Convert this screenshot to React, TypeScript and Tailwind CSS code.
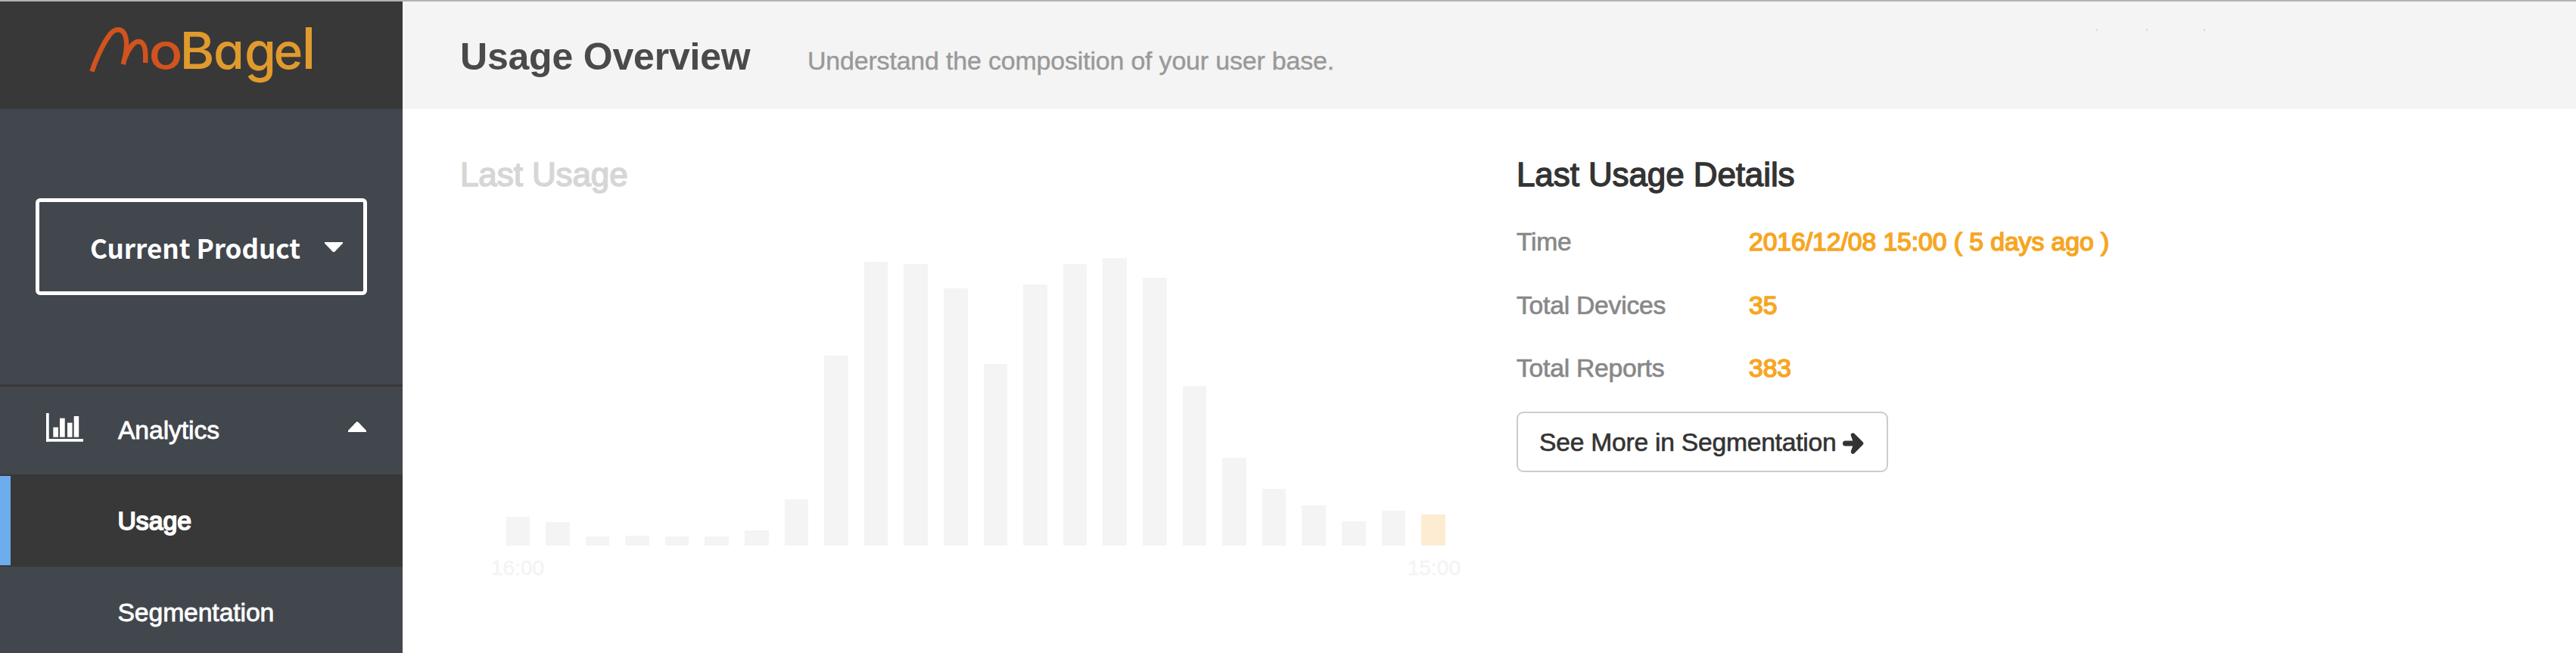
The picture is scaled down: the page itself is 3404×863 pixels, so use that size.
const BARS = [
  38, 31, 12.5, 13.5, 12.3, 12.3, 20, 61, 251.5, 375, 372, 340, 240, 345, 372.3, 380,
  354, 211.3, 115.7, 75.3, 52.7, 32, 46.3, 40.7,
];

const DETAILS = [
  { label: "Time", value: "2016/12/08 15:00 ( 5 days ago )" },
  { label: "Total Devices", value: "35" },
  { label: "Total Reports", value: "383" },
];

function Logo() {
  return (
    <svg
      className="block h-[142px] w-[532px]"
      viewBox="0 2 532 142"
      fontFamily="Inter, sans-serif"
      fontWeight={500}
      fontSize={66}
      style={{ fontFeatureSettings: '"cv11"' }}
    >
      <path
        d="M121.500 94.500C126 80 135 60 143.500 48C151 37 161 36.500 165 46C169 56 166.500 72 162.700 85M163.500 81C169 66 176 55 183 54.800C192 55 193 68 192 83"
        fill="none"
        stroke="#d1531e"
        strokeWidth={6.500}
      />
      <text x={196.500} y={91} textLength={45} lengthAdjust="spacingAndGlyphs" fill="#d1531e">
        o
      </text>
      <g fill="#e09a2d">
        <text x={237.500} y={91} fontSize={68} textLength={46} lengthAdjust="spacingAndGlyphs">B</text>
        <text x={282} y={91}>a</text>
        <text x={323} y={94} fontSize={72} textLength={42} lengthAdjust="spacingAndGlyphs">g</text>
        <text x={361.500} y={91}>e</text>
        <text x={398.500} y={91} fontSize={75}>l</text>
      </g>
    </svg>
  );
}

function ChartIcon() {
  return (
    <svg className="h-[38px] w-[49px] shrink-0" viewBox="0 0 49 38" fill="#fff">
      <rect x="0" y="0" width="3.700" height="37.700" />
      <rect x="0" y="34" width="49" height="3.700" />
      <rect x="9.300" y="18.700" width="6.700" height="13" />
      <rect x="18" y="6.700" width="6.700" height="25" />
      <rect x="28" y="12.700" width="6.500" height="19" />
      <rect x="36.700" y="4" width="6.500" height="27.700" />
    </svg>
  );
}

function Sidebar() {
  return (
    <aside className="flex w-[532px] shrink-0 flex-col overflow-hidden bg-[#42464d] text-[33.7px] leading-none text-white">
      <div className="h-[142px] shrink-0 bg-[#383838]">
        <Logo />
      </div>
      <div className="flex h-[364px] shrink-0 items-center pl-[47px]">
        <button className="flex h-[128px] w-[438px] items-center rounded-[6px] border-[5px] border-white pl-[67px] font-['Noto_Sans_CJK_SC',sans-serif] text-[35px] font-bold">
          <span className="w-[309.5px] text-left whitespace-nowrap">Current Product</span>
          <svg className="h-[13px] w-[24px]" viewBox="0 0 24 13" fill="#fff">
            <path d="M0 0H24V1.500L13.500 12.500Q12 13.500 10.500 12.500L0 1.500Z" />
          </svg>
        </button>
      </div>
      <div className="flex h-[119px] shrink-0 items-center border-t-[3px] border-[#383838] pl-[61px]">
        <div className="mb-[8px] flex">
          <ChartIcon />
        </div>
        <span className="ml-[46px] w-[304px] tracking-[-0.1px] [-webkit-text-stroke:0.8px_white]">Analytics</span>
        <svg className="mb-[10px] h-[14px] w-[24px]" viewBox="0 0 24 14" fill="#fff">
          <path d="M0 14V12L10.500 1Q12 -0.500 13.500 1L24 12V14Z" />
        </svg>
      </div>
      <div className="flex h-[122px] shrink-0 items-center bg-[#383838]">
        <div className="h-[118px] w-[14px] bg-[#6cadee]" />
        <span className="ml-[141.5px] pt-[2px] [-webkit-text-stroke:1.8px_white]">Usage</span>
      </div>
      <div className="flex h-[122px] shrink-0 items-center pl-[155.5px]">
        <span className="tracking-[-0.1px] [-webkit-text-stroke:0.8px_white]">Segmentation</span>
      </div>
    </aside>
  );
}

function UsageChart() {
  return (
    <section className="w-[1397px] shrink-0">
      <h2 className="ml-px text-[44px] leading-[60px] tracking-[-0.1px] text-[#d6d6d6] [-webkit-text-stroke:1.6px_#d6d6d6]">
        Last Usage
      </h2>
      <div className="flex h-[460px] items-end gap-[21px] pl-[61.5px]">
        {BARS.map((h, i) => (
          <div
            key={i}
            className={i === BARS.length - 1 ? "w-[31.6px] bg-[#fdebd2]" : "w-[31.6px] bg-[#f4f4f4]"}
            style={{ height: h }}
          />
        ))}
      </div>
      <div className="mt-[10px] ml-[42px] flex w-[1281px] justify-between text-[28px] leading-[40px] text-[#f4f4f4] [-webkit-text-stroke:0.6px_#f4f4f4]">
        <span>16:00</span>
        <span>15:00</span>
      </div>
    </section>
  );
}

function UsageDetails() {
  return (
    <section>
      <h2 className="text-[44px] leading-[60px] tracking-[-0.1px] text-[#333] [-webkit-text-stroke:1.4px_#333]">
        Last Usage Details
      </h2>
      <dl className="mt-[17px] text-[33.7px]">
        {DETAILS.map((d) => (
          <div key={d.label} className="flex h-[83.3px] items-center pt-px leading-none">
            <dt className="w-[307px] tracking-[-0.25px] text-[#888] [-webkit-text-stroke:0.7px_#888]">{d.label}</dt>
            <dd className="tracking-[-0.05px] whitespace-nowrap text-[#f6a623] [-webkit-text-stroke:1.6px_#f6a623]">{d.value}</dd>
          </div>
        ))}
      </dl>
      <button className="mt-[16px] flex h-[80px] w-[491px] items-center rounded-[9px] border-2 border-[#ccc] bg-white pl-[28px] text-[33.7px] leading-none text-[#333]">
        <span className="w-[401px] pt-[2px] text-left tracking-[-0.27px] whitespace-nowrap [-webkit-text-stroke:0.6px_#333]">
          See More in Segmentation
        </span>
        <svg className="mt-[5px] h-[30px] w-[29px]" viewBox="0 0 29 30" fill="none" stroke="#333" strokeLinecap="round" strokeLinejoin="round">
          <path d="M3.500 15H22" strokeWidth="7" />
          <path d="M13.500 4L24.500 15L13.500 26L17.500 15Z" strokeWidth="5.500" fill="#333" />
        </svg>
      </button>
    </section>
  );
}

export default function App() {
  return (
    <div className="flex h-[863px] w-full overflow-hidden border-t-2 border-[#b2b2b2] bg-white font-['Liberation_Sans',Arial,sans-serif]">
      <Sidebar />
      <main className="flex-1">
        <header className="relative flex h-[142px] items-baseline bg-[#f4f4f4] pt-[43px] pl-[76px]">
          <h1 className="w-[459px] text-[50px] leading-[60px] font-bold tracking-[-0.2px] whitespace-nowrap text-[#4a4a4a]">
            Usage Overview
          </h1>
          <p className="text-[34px] leading-[60px] tracking-[-0.2px] text-[#999] [-webkit-text-stroke:0.4px_#999]">
            Understand the composition of your user base.
          </p>
          <i className="absolute top-[36px] left-[2238px] h-[3px] w-[2px] bg-[#dcdcdc]" />
          <i className="absolute top-[36px] left-[2304px] h-[3px] w-[2px] bg-[#dcdcdc]" />
          <i className="absolute top-[36px] left-[2380px] h-[3px] w-[2px] bg-[#dcdcdc]" />
        </header>
        <div className="flex pt-[57px] pl-[75px]">
          <UsageChart />
          <UsageDetails />
        </div>
      </main>
    </div>
  );
}
